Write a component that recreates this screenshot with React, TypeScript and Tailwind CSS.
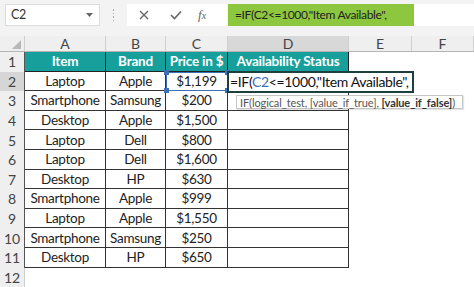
import React from "react";

const rows = [
  ["Laptop", "Apple", "$1,199"],
  ["Smartphone", "Samsung", "$200"],
  ["Desktop", "Apple", "$1,500"],
  ["Laptop", "Dell", "$800"],
  ["Laptop", "Dell", "$1,600"],
  ["Desktop", "HP", "$630"],
  ["Smartphone", "Apple", "$999"],
  ["Laptop", "Apple", "$1,550"],
  ["Smartphone", "Samsung", "$250"],
  ["Desktop", "HP", "$650"],
];

const font = { fontFamily: "Lato, 'Open Sans', 'Liberation Sans', sans-serif" };

export default function App() {
  const cols = "grid-cols-[25px_81px_60px_62px_121px_63px_62px]";
  return (
    <div className="w-[474px] h-[287px] overflow-hidden bg-white relative" style={font}>
      {/* Toolbar */}
      <div className="h-[36px] bg-[#f3f3f3] flex items-start pt-[4px] pl-[5px]">
        <div className="w-[95px] h-[22px] bg-white border border-[#dcdcdc] flex items-center justify-between pl-[5px] pr-[6px]">
          <span className="text-[12.5px] tracking-[-0.3px] text-[#333]">C2</span>
          <svg width="7" height="4" viewBox="0 0 7 4"><path d="M0 0 L7 0 L3.5 4 Z" fill="#666" /></svg>
        </div>
        <div className="w-[27px] h-[22px] flex items-center justify-center">
          <div className="flex flex-col gap-[2px]">
            <div className="w-[1.5px] h-[1.5px] bg-[#aaa]" />
            <div className="w-[1.5px] h-[1.5px] bg-[#aaa]" />
            <div className="w-[1.5px] h-[1.5px] bg-[#aaa]" />
            <div className="w-[1.5px] h-[1.5px] bg-[#aaa]" />
          </div>
        </div>
        <div className="w-[100px] h-[22px] bg-white flex items-center">
          <svg className="ml-[12px]" width="10" height="10" viewBox="0 0 10 10"><path d="M1 1 L9 9 M9 1 L1 9" stroke="#666" strokeWidth="1.4" /></svg>
          <svg className="ml-[21px]" width="12" height="10" viewBox="0 0 12 10"><path d="M1 5 L4.5 8.5 L11 1.5" stroke="#666" strokeWidth="1.6" fill="none" /></svg>
          <span className="ml-[16px] text-[13px] italic text-[#666]" style={{ fontFamily: "'Liberation Serif', serif" }}>f<span className="text-[10px]">x</span></span>
        </div>
        <div className="w-[186px] h-[22px] bg-[#8dc63f] flex items-center pl-[7px] ml-[1px] overflow-hidden">
          <span className="text-[12px] tracking-[-0.35px] text-[#222] whitespace-nowrap">=IF(C2&lt;=1000,"Item Available",</span>
        </div>
        <div className="flex-1 h-[22px] bg-white" />
      </div>

      {/* Column headers */}
      <div className={`grid ${cols} h-[16px] bg-[#efefef] border-b border-[#b5b5b5]`}>
        <div className="relative border-r border-[#cfcfcf]">
          <svg className="absolute right-[3px] bottom-[2px]" width="9" height="9" viewBox="0 0 9 9"><path d="M9 0 L9 9 L0 9 Z" fill="#b8b8b8" /></svg>
        </div>
        {["A", "B", "C", "D", "E", "F"].map((c) => (
          <div
            key={c}
            className={`flex items-center justify-center text-[14px] leading-none text-[#444] border-r border-[#cfcfcf] ${c === "D" ? "bg-[#d8d8d8]" : ""}`}
          >
            {c}
          </div>
        ))}
      </div>

      {/* Rows */}
      <div className={`grid ${cols} auto-rows-[19.6px]`}>
        {Array.from({ length: 12 }).map((_, i) => {
          const r = i + 1;
          const header = (
            <div
              key={`h${r}`}
              className={`flex items-center justify-center text-[14px] text-[#444] border-r border-[#555] ${r === 2 ? "bg-[#d6d6d6]" : "bg-[#efefef]"} ${r === 12 ? "border-r-[#cfcfcf]" : ""}`}
            >
              {r}
            </div>
          );
          if (r === 1) {
            return (
              <React.Fragment key={r}>
                {header}
                {["Item", "Brand", "Price in $", "Availability Status"].map((t) => (
                  <div key={t} className="bg-[#17a09b] text-white font-bold text-[13.5px] tracking-[-0.2px] flex items-center justify-center border-r border-b border-[#222] whitespace-nowrap overflow-hidden">
                    {t}
                  </div>
                ))}
                <div />
                <div />
              </React.Fragment>
            );
          }
          if (r === 12) {
            return (
              <React.Fragment key={r}>
                {header}
                <div /><div /><div /><div /><div /><div />
              </React.Fragment>
            );
          }
          const d = rows[r - 2];
          return (
            <React.Fragment key={r}>
              {header}
              {d.map((t, j) => (
                <div key={j} className="flex items-center justify-center text-[13.5px] tracking-[-0.3px] text-[#222] border-r border-b border-[#333] whitespace-nowrap">
                  {t}
                </div>
              ))}
              <div className="border-r border-b border-[#333]" />
              <div />
              <div />
            </React.Fragment>
          );
        })}
      </div>

      {/* C2 reference highlight */}
      <div className="absolute left-[166px] top-[72px] w-[62px] h-[19px] border border-[#3b6fb6]">
        <div className="absolute -left-[3px] -top-[3px] w-[5px] h-[5px] bg-[#3b6fb6]" />
        <div className="absolute -right-[3px] -top-[3px] w-[5px] h-[5px] bg-[#3b6fb6]" />
        <div className="absolute -left-[3px] -bottom-[3px] w-[5px] h-[5px] bg-[#3b6fb6]" />
        <div className="absolute -right-[3px] -bottom-[3px] w-[5px] h-[5px] bg-[#3b6fb6]" />
      </div>

      {/* Edit box over D2 */}
      <div className="absolute left-[227px] top-[71px] w-[187px] h-[22px] bg-white border-2 border-[#1d3f3d] flex items-center pl-[1px]">
        <span className="text-[14px] tracking-[-0.35px] text-[#111] whitespace-nowrap leading-none">
          =IF(<span className="text-[#3b6fb6]">C2</span>&lt;=1000,"Item Available",
        </span>
      </div>

      {/* Tooltip */}
      <div className="absolute left-[236px] top-[95px] w-[227px] h-[14px] bg-white border border-[#c6c6c6] flex items-center px-[3px] shadow-[1px_1px_1px_rgba(0,0,0,0.1)]">
        <span className="text-[11px] tracking-[-0.1px] text-[#555] whitespace-nowrap leading-none">
          IF(logical_test, [value_if_true], <b className="text-[#333]">[value_if_false]</b>)
        </span>
      </div>
    </div>
  );
}
